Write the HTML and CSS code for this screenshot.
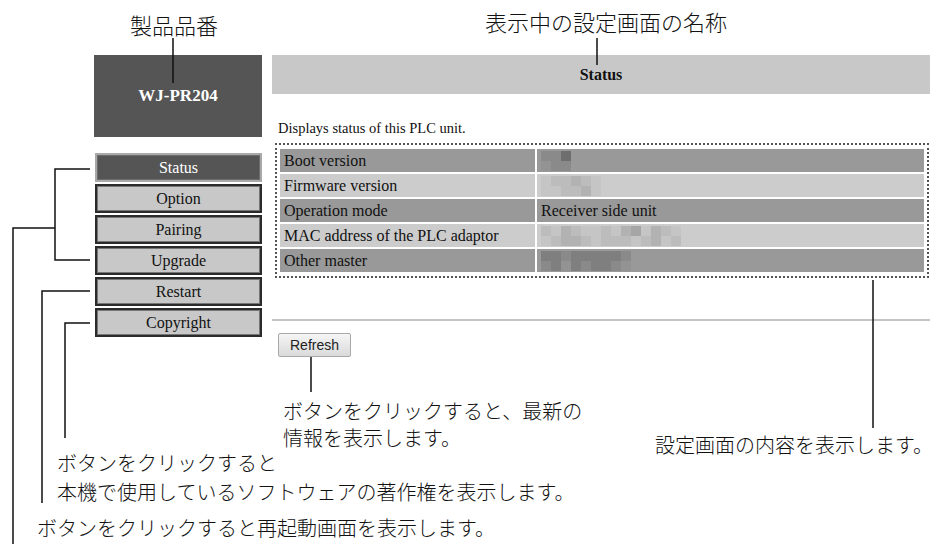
FILE: index.html
```html
<html>

<head>
  <link rel="stylesheet" href="styles.css">
</head>

<body>
  <div class="sheet">
    <div class="ui">
      <div class="side">
        <div class="model">WJ-PR204</div>
        <ul class="menu">
          <li class="menu-item current">Status</li>
          <li class="menu-item">Option</li>
          <li class="menu-item">Pairing</li>
          <li class="menu-item">Upgrade</li>
          <li class="menu-item">Restart</li>
          <li class="menu-item">Copyright</li>
        </ul>
      </div>

      <div class="main">
        <div class="title">Status</div>
        <p class="lead">Displays status of this PLC unit.</p>
        <div class="content">
          <table class="status">
            <tr class="dark">
              <td class="key">Boot version</td>
              <td class="val">
                <div class="mosaic m3">
                  <span class="d2"></span><span class="d2"></span><span class="d4"></span>
                  <span class="d1"></span><span class="d2"></span><span class="d2"></span>
                </div>
              </td>
            </tr>
            <tr class="light">
              <td class="key">Firmware version</td>
              <td class="val">
                <div class="mosaic m6">
                  <span class="l1"></span><span class="l2"></span><span class="l2"></span><span class="l3"></span><span class="l2"></span><span class="l1"></span>
                  <span class="l1"></span><span class="l1"></span><span class="l2"></span><span class="l2"></span><span class="l3"></span><span class="l1"></span>
                </div>
              </td>
            </tr>
            <tr class="dark">
              <td class="key">Operation mode</td>
              <td class="val">Receiver side unit</td>
            </tr>
            <tr class="light">
              <td class="key">MAC address of the PLC adaptor</td>
              <td class="val">
                <div class="mosaic m14">
                  <span class="l2"></span><span class="l1"></span><span class="l3"></span><span class="l2"></span><span class="l1"></span><span class="l1"></span><span class="l2"></span><span class="l1"></span><span class="l3"></span><span class="l4"></span><span class="l1"></span><span class="l3"></span><span class="l2"></span><span class="l1"></span>
                  <span class="l1"></span><span class="l2"></span><span class="l3"></span><span class="l3"></span><span class="l2"></span><span class="l1"></span><span class="l2"></span><span class="l2"></span><span class="l2"></span><span class="l1"></span><span class="l2"></span><span class="l3"></span><span class="l1"></span><span class="l2"></span>
                </div>
              </td>
            </tr>
            <tr class="dark">
              <td class="key">Other master</td>
              <td class="val">
                <div class="mosaic m9">
                  <span class="d3"></span><span class="d3"></span><span class="d2"></span><span class="d3"></span><span class="d3"></span><span class="d3"></span><span class="d3"></span><span class="d3"></span><span class="d2"></span>
                  <span class="d2"></span><span class="d3"></span><span class="d1"></span><span class="d3"></span><span class="d2"></span><span class="d3"></span><span class="d3"></span><span class="d2"></span><span class="d1"></span>
                </div>
              </td>
            </tr>
          </table>
        </div>
        <hr class="rule">
        <div class="actions">
          <button class="btn">Refresh</button>
        </div>
      </div>
    </div>

    <!-- callout leaders -->
    <svg class="leaders" width="936" height="544" viewBox="0 0 936 544">
      <path d="M173 38 V83" />
      <path d="M597 38 V65" />
      <path d="M873 280 V428" />
      <path d="M311 357 V392" />
      <path d="M90 169 H55 V260 H90" />
      <path d="M55 228 H13 V544" />
      <path d="M90 291 H42 V503" />
      <path d="M90 323 H65 V438" />
    </svg>

    <div class="note note-lg note-model">製品品番</div>
    <div class="note note-lg note-title">表示中の設定画面の名称</div>
    <div class="note note-content">設定画面の内容を表示します。</div>
    <div class="note note-refresh">ボタンをクリックすると、最新の<br>情報を表示します。</div>
    <div class="note note-copyright">ボタンをクリックすると<br>本機で使用しているソフトウェアの著作権を表示します。</div>
    <div class="note note-restart">ボタンをクリックすると再起動画面を表示します。</div>
  </div>
</body>

</html>
```

FILE: styles.css
```css
body {
  margin: 0;
  background: #ffffff;
  color: #111111;
  font-family: "Liberation Serif", serif;
}

.sheet {
  position: relative;
  width: 936px;
  height: 544px;
  overflow: hidden;
}

.ui {
  display: flex;
  gap: 10px;
  padding: 55px 6px 0 94px;
}

.side {
  width: 168px;
  flex: none;
}

.model {
  height: 82px;
  background: #555555;
  color: #ffffff;
  font-size: 17px;
  font-weight: bold;
  display: flex;
  align-items: center;
  justify-content: center;
}

.menu {
  list-style: none;
  margin: 16px 0 0 0;
  padding: 0 0 0 1px;
}

.menu-item {
  box-sizing: border-box;
  height: 29px;
  margin-bottom: 2px;
  background: #c8c8c8;
  border: 2px solid #2b2b2b;
  box-shadow: inset 0 0 0 1px #767676;
  text-align: center;
  font-size: 16px;
  line-height: 25px;
}

.menu-item.current {
  background: #555555;
  color: #ffffff;
  border-color: #a9a9a9;
  box-shadow: inset 0 0 0 1px #6c6c6c;
}

.main {
  flex: 1;
}

.title {
  height: 39px;
  background: #c8c8c8;
  font-size: 16px;
  font-weight: bold;
  display: flex;
  align-items: center;
  justify-content: center;
}

.lead {
  margin: 25px 0 6px 6px;
  font-size: 14.5px;
  line-height: 18px;
}

.content {
  margin: 0 1px 0 3px;
  padding: 2px 1px;
  border: 2px dotted #555555;
}

.status {
  width: 100%;
  border-spacing: 2px;
  font-size: 16px;
}

.status td {
  height: 23px;
  padding: 0 4px;
  line-height: 23px;
}

.status td.key {
  width: 247px;
}

.dark td {
  background: #999999;
}

.light td {
  background: #cccccc;
}

.mosaic {
  display: grid;
  grid-auto-rows: 10px;
}

.m3 { grid-template-columns: repeat(3, 10px); }
.m6 { grid-template-columns: repeat(6, 10px); }
.m9 { grid-template-columns: repeat(9, 10px); }
.m14 { grid-template-columns: repeat(14, 10px); }

.d1 { background: #939393; }
.d2 { background: #8a8a8a; }
.d3 { background: #7f7f7f; }
.d4 { background: #6e6e6e; }
.l1 { background: #c5c5c5; }
.l2 { background: #bcbcbc; }
.l3 { background: #b2b2b2; }
.l4 { background: #a6a6a6; }

.rule {
  border: 0;
  height: 2px;
  margin: 41px 0 0 0;
  background: #c4c4c4;
}

.actions {
  margin: 12px 0 0 6px;
}

.btn {
  width: 73px;
  height: 24px;
  padding: 0;
  border: 1px solid #a9a9a9;
  border-radius: 2px;
  background: linear-gradient(to bottom, #f5f5f5, #dadada);
  color: #222222;
  font-family: "Liberation Sans", Arial, sans-serif;
  font-size: 14px;
}

/* callouts */
.leaders {
  position: absolute;
  left: 0;
  top: 0;
  fill: none;
  stroke: #111111;
  stroke-width: 1.5;
}

.note {
  position: absolute;
  font-family: "Noto Sans CJK JP", sans-serif;
  font-size: 20px;
  font-weight: 300;
  line-height: 27px;
  white-space: nowrap;
  color: #111111;
}

.note-lg {
  font-size: 22px;
  line-height: 28px;
}

.note-model {
  left: 130px;
  top: 10px;
}

.note-title {
  left: 485px;
  top: 7px;
}

.note-content {
  left: 655px;
  top: 431px;
}

.note-refresh {
  left: 283px;
  top: 397px;
}

.note-copyright {
  left: 57px;
  top: 448px;
  line-height: 29px;
}

.note-restart {
  left: 37px;
  top: 514px;
}
```
